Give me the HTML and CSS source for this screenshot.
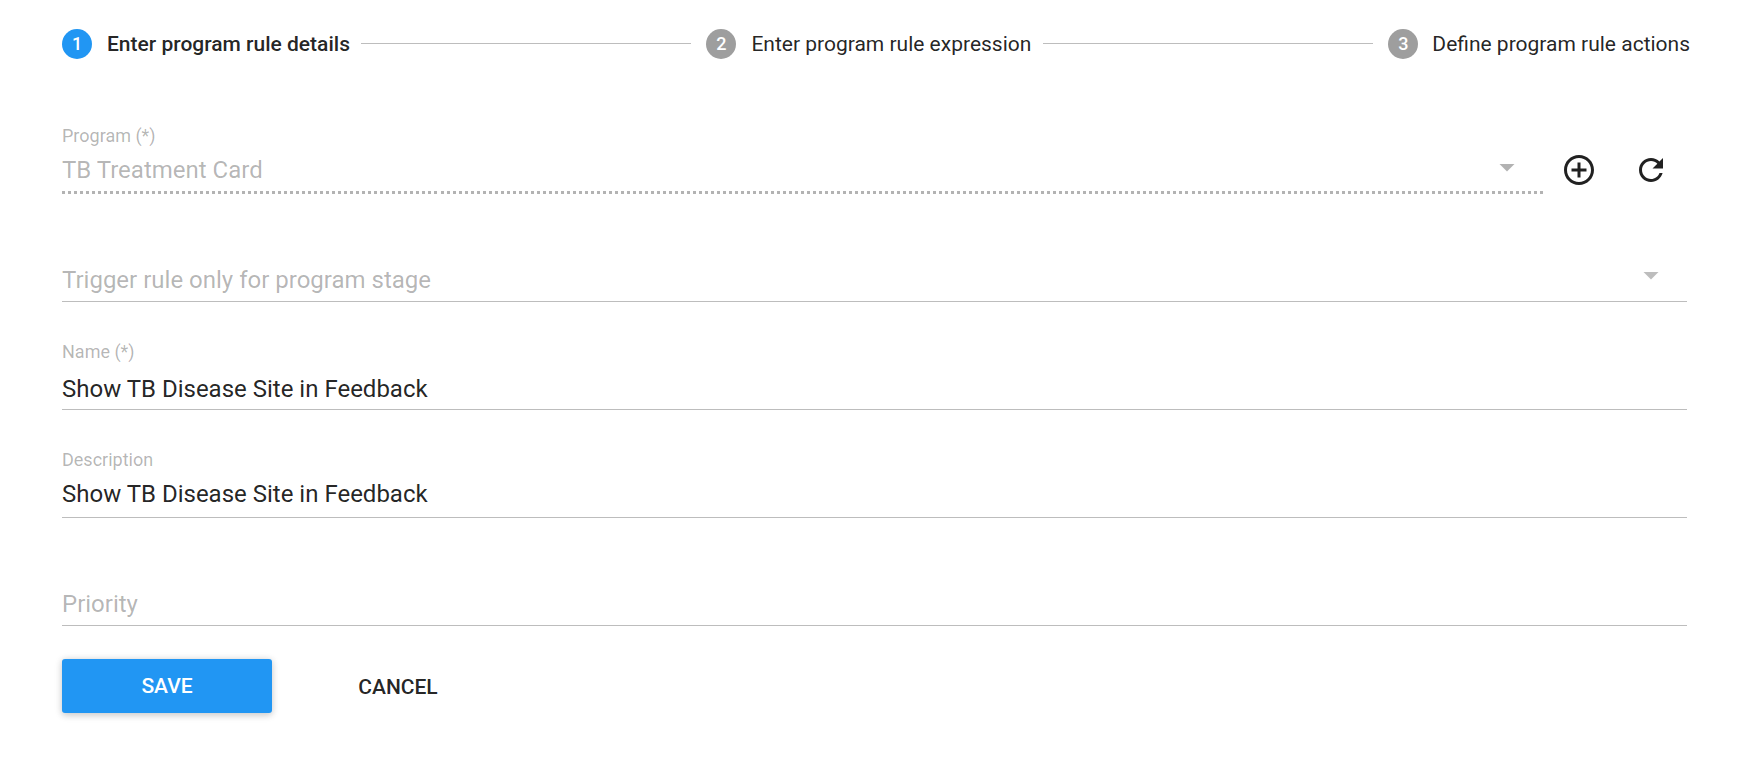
FILE: index.html
```html
<!DOCTYPE html>
<html lang="en">
<head>
<meta charset="utf-8">
<title>Program rule</title>
<link rel="stylesheet" href="styles.css">
</head>
<body>
<nav class="stepper">
  <div class="step step-active"><span class="step-number">1</span><span class="step-label">Enter program rule details</span></div>
  <span class="connector"></span>
  <div class="step"><span class="step-number">2</span><span class="step-label">Enter program rule expression</span></div>
  <span class="connector"></span>
  <div class="step step-last"><span class="step-number">3</span><span class="step-label">Define program rule actions</span></div>
</nav>
<main class="form">
  <div class="field-row">
    <div class="field field-disabled">
      <div class="label">Program (*)</div>
      <div class="value"><span>TB Treatment Card</span>
        <svg class="icon arrow" viewBox="0 0 24 24"><path d="M7 10l5 5 5-5z"/></svg>
      </div>
    </div>
    <button class="icon-button" aria-label="Add"><svg class="icon" viewBox="0 0 24 24"><path d="M13 7h-2v4H7v2h4v4h2v-4h4v-2h-4V7zm-1-5C6.48 2 2 6.48 2 12s4.48 10 10 10 10-4.48 10-10S17.52 2 12 2zm0 18c-4.41 0-8-3.59-8-8s3.59-8 8-8 8 3.59 8 8-3.59 8-8 8z"/></svg></button>
    <button class="icon-button" aria-label="Refresh"><svg class="icon" viewBox="0 0 24 24"><path d="M17.65 6.35C16.2 4.9 14.21 4 12 4c-4.42 0-7.99 3.58-7.99 8s3.57 8 7.99 8c3.73 0 6.84-2.55 7.73-6h-2.08c-.82 2.33-3.04 4-5.65 4-3.31 0-6-2.69-6-6s2.69-6 6-6c1.66 0 3.14.69 4.22 1.78L13 11h7V4l-2.35 2.35z"/></svg></button>
  </div>
  <div class="field field-empty">
    <div class="value"><span>Trigger rule only for program stage</span>
      <svg class="icon arrow arrow-empty" viewBox="0 0 24 24"><path d="M7 10l5 5 5-5z"/></svg>
    </div>
  </div>
  <div class="field field-input">
    <div class="label">Name (*)</div>
    <div class="value">Show TB Disease Site in Feedback</div>
  </div>
  <div class="field">
    <div class="label">Description</div>
    <div class="value">Show TB Disease Site in Feedback</div>
  </div>
  <div class="field field-empty">
    <div class="value">Priority</div>
  </div>
  <div class="actions">
    <button class="button button-primary">SAVE</button>
    <button class="button button-flat">CANCEL</button>
  </div>
</main>
</body>
</html>
```

FILE: styles.css
```css
* { box-sizing: border-box; }

body {
  min-height: 100vh;
  margin: 0;
  background: #fff;
  color: rgba(0, 0, 0, 0.87);
  font-family: Roboto, "Liberation Sans", sans-serif;
}

.stepper {
  display: flex;
  align-items: center;
  height: 86px;
  padding: 2px 47px 0 62px;
}

.step {
  display: flex;
  align-items: center;
  gap: 15px;
  font-size: 21px;
  line-height: 30px;
  white-space: nowrap;
}

.step-active { font-weight: 500; }

.step-last { gap: 14px; }

.step-number {
  width: 30px;
  height: 30px;
  border-radius: 50%;
  background: #9e9e9e;
  color: #fff;
  font-size: 18px;
  font-weight: 500;
  text-align: center;
}

.step-active .step-number { background: #2196f3; }

.connector {
  flex: 1;
  height: 1px;
  margin: 0 15px 1px 12px;
  background: #bdbdbd;
}

.form { padding: 0 50px 53px 62px; }

.connector:nth-child(2) { margin-right: 15px; margin-left: 11.5px; }

.field-row {
  display: flex;
  align-items: flex-end;
}

.field {
  height: 108px;
  padding-top: 39px;
  border-bottom: 1px solid #bdbdbd;
}

.field-empty { padding-top: 68px; }

.field-disabled {
  flex: 1;
  border-bottom: 0;
  background: repeating-linear-gradient(to right, #b3b3b3 0 3px, transparent 3px 6.008px) left bottom / 100% 3px no-repeat;
}

.label {
  margin-bottom: 5px;
  color: rgba(0, 0, 0, 0.3);
  font-size: 18px;
  line-height: 22px;
}

.field-input .label { margin-bottom: 8px; }

.value {
  display: flex;
  justify-content: space-between;
  height: 36px;
  font-size: 24px;
  line-height: 36px;
}

.field-disabled .value,
.field-empty .value { color: rgba(0, 0, 0, 0.3); }

.icon {
  display: block;
  width: 36px;
  height: 36px;
  fill: currentColor;
}

.arrow { margin: -3px 18px 0 0; }

.arrow-empty {
  margin-top: -5px;
  fill: #bdbdbd;
}

.icon-button {
  display: flex;
  align-items: center;
  justify-content: center;
  width: 72px;
  height: 48px;
  padding: 0;
  border: 0;
  background: none;
  color: rgba(0, 0, 0, 0.87);
}

.actions {
  display: flex;
  gap: 60px;
  padding-top: 33px;
}

.button {
  height: 54px;
  padding: 0;
  border: 0;
  border-radius: 3px;
  font: 500 21px/54px Roboto, "Liberation Sans", sans-serif;
}

.button-primary {
  width: 210px;
  background: #2196f3;
  color: #fff;
  box-shadow: 0 1.5px 9px rgba(0, 0, 0, 0.12), 0 1.5px 6px rgba(0, 0, 0, 0.12);
}

.button-flat {
  width: 132px;
  padding-top: 1px;
  background: none;
  color: rgba(0, 0, 0, 0.87);
}
```
